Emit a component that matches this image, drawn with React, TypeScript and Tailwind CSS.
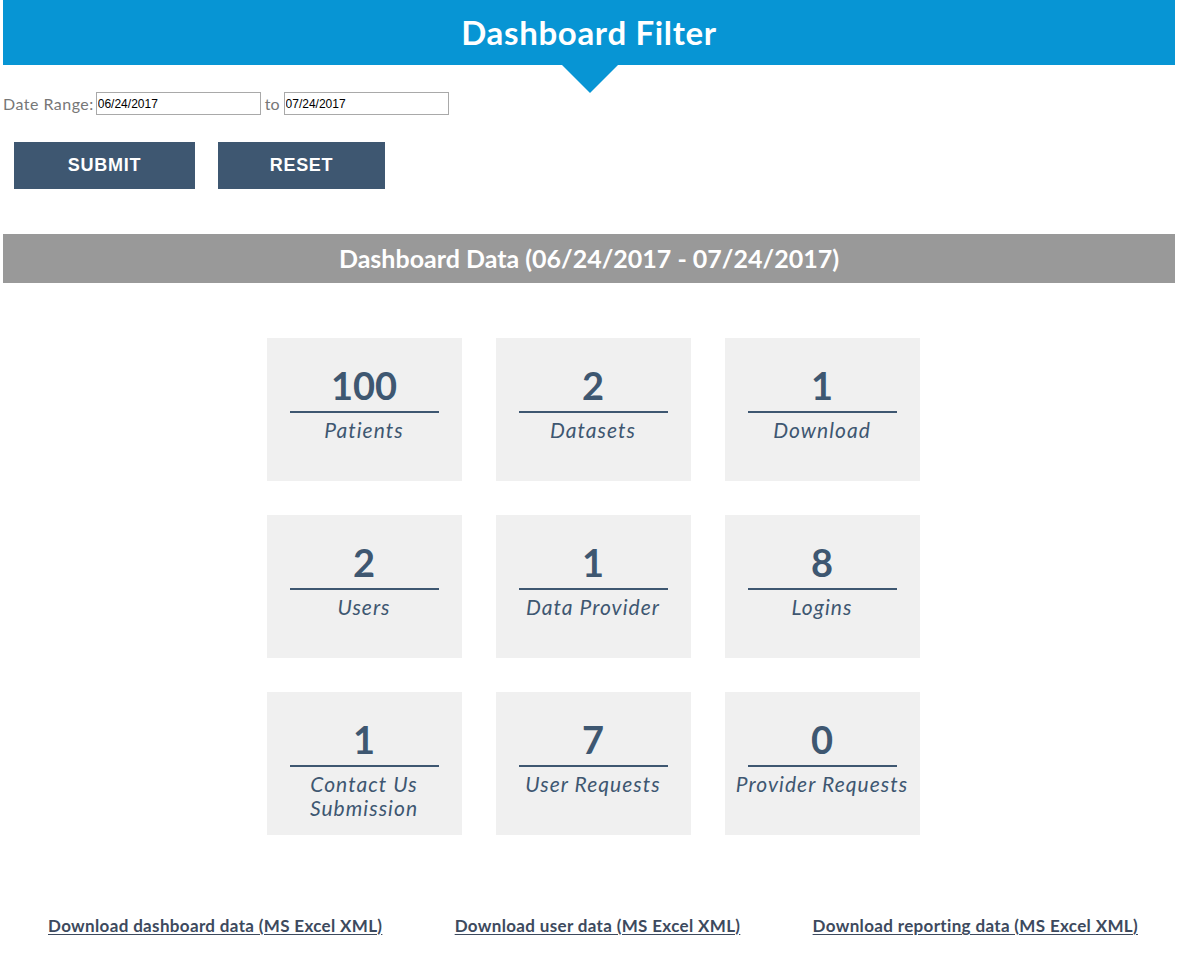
import React from 'react';

interface Stat {
  value: number;
  label: string;
}

const stats: Stat[] = [
  { value: 100, label: 'Patients' },
  { value: 2, label: 'Datasets' },
  { value: 1, label: 'Download' },
  { value: 2, label: 'Users' },
  { value: 1, label: 'Data Provider' },
  { value: 8, label: 'Logins' },
  { value: 1, label: 'Contact Us Submission' },
  { value: 7, label: 'User Requests' },
  { value: 0, label: 'Provider Requests' },
];

const links = [
  'Download dashboard data (MS Excel XML)',
  'Download user data (MS Excel XML)',
  'Download reporting data (MS Excel XML)',
];

const StatTile = ({ stat }: { stat: Stat }) => (
  <div className="w-[195px] h-[143px] bg-[#f0f0f0] flex flex-col items-center pt-[27px]">
    <div className="text-[38px] leading-[40px] font-bold text-[#3e5771]">{stat.value}</div>
    <div className="w-[149px] h-[2px] bg-[#3e5771] mt-[6px]"></div>
    <div className="text-[21px] leading-[24px] italic text-[#3e5771] text-center mt-[5px] tracking-[0.05em] whitespace-nowrap">
      {stat.label === 'Contact Us Submission' ? (
        <>
          Contact Us
          <br />
          Submission
        </>
      ) : (
        stat.label
      )}
    </div>
  </div>
);

const App = () => {
  return (
    <div className="min-h-[957px] bg-white font-['Lato',sans-serif] px-[3px] pb-6">
      {/* Header */}
      <div className="relative">
        <div className="h-[65px] bg-[#0795d4] flex items-center justify-center">
          <h1 className="text-[33px] font-bold text-white leading-none tracking-[0.02em]">Dashboard Filter</h1>
        </div>
        <div className="absolute left-[559px] top-[65px] w-0 h-0 border-l-[28px] border-r-[28px] border-t-[28px] border-l-transparent border-r-transparent border-t-[#0795d4]"></div>
      </div>

      {/* Date range */}
      <div className="flex items-center mt-[27px] h-[23px]">
        <span className="text-[16px] text-[#777] mr-[2px] tracking-[0.03em]">Date Range:</span>
        <input
          readOnly
          value="06/24/2017"
          className="w-[165px] h-[23px] border border-[#a9a9a9] px-[1px] text-[12px] text-black font-['Liberation_Sans',sans-serif] outline-none"
        />
        <span className="text-[16px] text-[#777] mx-[4px]">to</span>
        <input
          readOnly
          value="07/24/2017"
          className="w-[165px] h-[23px] border border-[#a9a9a9] px-[1px] text-[12px] text-black font-['Liberation_Sans',sans-serif] outline-none"
        />
      </div>

      {/* Buttons */}
      <div className="flex gap-[23px] mt-[27px] ml-[11px]">
        <button className="w-[181px] h-[47px] bg-[#3e5771] text-white text-[18px] font-bold tracking-[0.04em] font-['Liberation_Sans',sans-serif]">
          SUBMIT
        </button>
        <button className="w-[167px] h-[47px] bg-[#3e5771] text-white text-[18px] font-bold tracking-[0.04em] font-['Liberation_Sans',sans-serif]">
          RESET
        </button>
      </div>

      {/* Data bar */}
      <div className="h-[49px] bg-[#999999] flex items-center justify-center mt-[45px]">
        <h2 className="text-[25px] font-bold text-white leading-none">Dashboard Data (06/24/2017 - 07/24/2017)</h2>
      </div>

      {/* Tiles */}
      <div className="flex justify-center pl-[8px] mt-[55px]">
        <div className="grid grid-cols-3 gap-x-[34px] gap-y-[34px]">
          {stats.map((stat, i) => (
            <StatTile key={i} stat={stat} />
          ))}
        </div>
      </div>

      {/* Download links */}
      <div className="flex justify-between pl-[45px] pr-[37px] mt-[78px]">
        {links.map((link) => (
          <a
            key={link}
            href="#"
            className="text-[17px] font-bold text-[#3d4a5e] underline underline-offset-2 tracking-[0.02em]"
          >
            {link}
          </a>
        ))}
      </div>
    </div>
  );
};

export default App;
